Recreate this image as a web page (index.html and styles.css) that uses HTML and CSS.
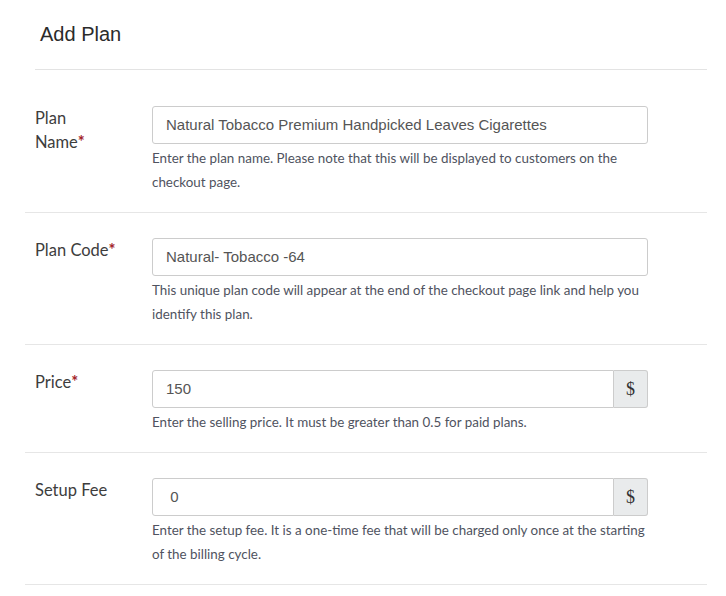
FILE: index.html
```html
<!DOCTYPE html>
<html>
<head>
<meta charset="utf-8">
<link rel="stylesheet" href="styles.css">
</head>
<body>
<div class="panel">
  <div class="panel-header">
    <h1 class="title">Add Plan</h1>
  </div>
  <div class="form-row">
    <label class="field-label">Plan Name<span class="req">*</span></label>
    <div class="field">
      <input class="text-input" type="text" value="Natural Tobacco Premium Handpicked Leaves Cigarettes">
      <p class="help">Enter the plan name. Please note that this will be displayed to customers on the checkout page.</p>
    </div>
  </div>
  <div class="form-row">
    <label class="field-label">Plan Code<span class="req">*</span></label>
    <div class="field">
      <input class="text-input" type="text" value="Natural- Tobacco -64">
      <p class="help">This unique plan code will appear at the end of the checkout page link and help you identify this plan.</p>
    </div>
  </div>
  <div class="form-row">
    <label class="field-label">Price<span class="req">*</span></label>
    <div class="field">
      <div class="input-group">
        <input class="text-input grouped" type="text" value="150">
        <span class="addon">$</span>
      </div>
      <p class="help">Enter the selling price. It must be greater than 0.5 for paid plans.</p>
    </div>
  </div>
  <div class="form-row">
    <label class="field-label">Setup Fee</label>
    <div class="field">
      <div class="input-group">
        <input class="text-input grouped" type="text" value=" 0">
        <span class="addon">$</span>
      </div>
      <p class="help">Enter the setup fee. It is a one-time fee that will be charged only once at the starting of the billing cycle.</p>
    </div>
  </div>
</div>
</body>
</html>
```
FILE: styles.css
```css
* { box-sizing: border-box; }
html, body {
  margin: 0;
  padding: 0;
  background: #ffffff;
}
.panel {
  margin-left: 25px;
  width: 682px;
}
.panel-header {
  margin-left: 10px;
  height: 70px;
  border-bottom: 1px solid #e3e3e3;
  margin-bottom: 11px;
  padding: 22px 0 0 5px;
}
.title {
  margin: 0;
  font-family: "Liberation Sans", Arial, sans-serif;
  font-weight: normal;
  font-size: 20px;
  line-height: 24px;
  color: #2b2b2b;
}
.form-row {
  display: flex;
  align-items: flex-start;
  padding: 25px 0 18px 10px;
  border-bottom: 1px solid #e6e6e6;
}
.field-label {
  width: 84px;
  margin-right: 33px;
  font-family: Lato, "Open Sans", sans-serif;
  font-size: 16.5px;
  line-height: 24px;
  color: #3d3d3d;
}
.req { color: #a31f2a; font-weight: bold; }
.field {
  width: 496px;
}
.text-input {
  display: block;
  width: 100%;
  height: 38px;
  margin: 0;
  padding: 0 13px 2px;
  border: 1px solid #cccccc;
  border-radius: 3px;
  font-family: "Liberation Sans", Arial, sans-serif;
  font-size: 15px;
  color: #555555;
  background: #fff;
  outline: none;
}
.input-group {
  display: flex;
}
.text-input.grouped {
  flex: 1;
  width: auto;
  border-radius: 3px 0 0 3px;
}
.addon {
  width: 34px;
  height: 38px;
  display: flex;
  align-items: center;
  justify-content: center;
  background: #e9ebec;
  border: 1px solid #cccccc;
  border-left: none;
  border-radius: 0 3px 3px 0;
  font-family: "Liberation Serif", "Times New Roman", serif;
  font-size: 18px;
  color: #333;
}
.help {
  margin: 2px 0 0 0;
  font-family: Lato, "Open Sans", sans-serif;
  font-size: 13.4px;
  line-height: 24px;
  color: #4f5360;
}
```
